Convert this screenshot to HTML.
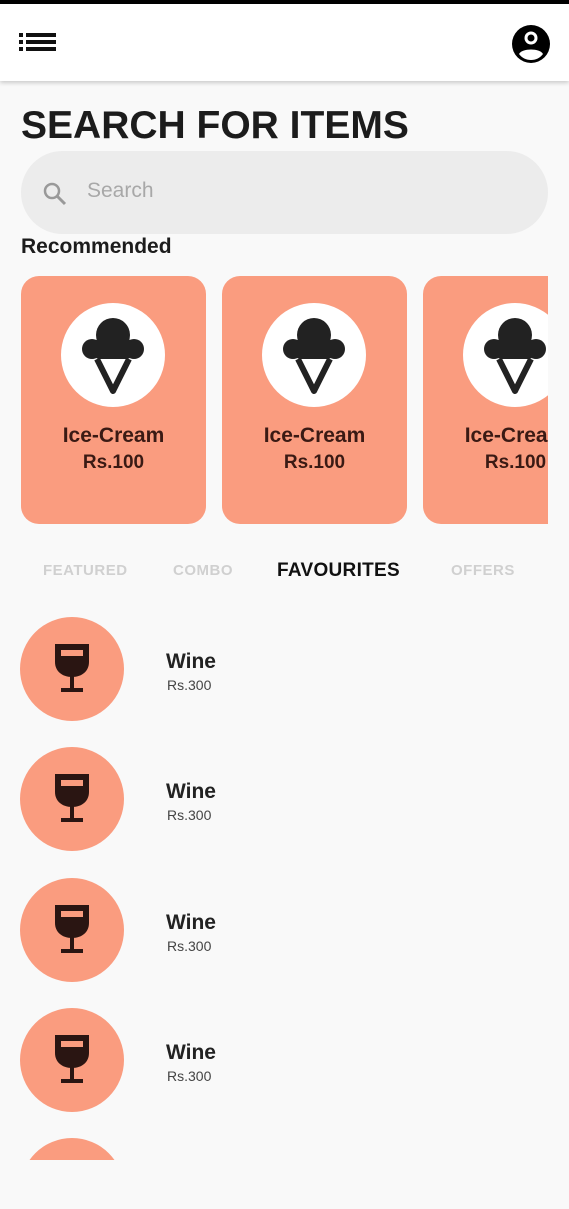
<!DOCTYPE html>
<html><head><meta charset="utf-8"><style>
*{margin:0;padding:0;box-sizing:border-box}
body{width:569px;height:1209px;background:#f9f9f9;font-family:"Liberation Sans",sans-serif;position:relative;overflow:hidden;color:#1c1c1c}
.top{position:absolute;left:0;top:0;width:569px;height:4px;background:#000}
.hdr{position:absolute;left:0;top:4px;width:569px;height:77px;background:#fff;box-shadow:0 2px 4px rgba(0,0,0,.18)}
h1{position:absolute;left:21px;top:104px;font-size:39px;font-weight:bold;letter-spacing:0px}
.search{position:absolute;left:21px;top:151px;width:527px;height:83px;border-radius:42px;background:#ececec}
.search span{position:absolute;left:66px;top:28px;font-size:21px;color:#a8a8a8}
.rec{position:absolute;left:21px;top:235px;font-size:21px;font-weight:bold}
.clip{position:absolute;left:0;top:270px;width:548px;height:270px;overflow:hidden}
.card{position:absolute;top:6px;width:185px;height:248px;border-radius:18px;background:#fa9c7f}
.card .c{position:absolute;left:40px;top:27px;width:104px;height:104px;border-radius:50%;background:#fff}
.card .n{position:absolute;left:0;width:185px;text-align:center;top:148px;font-size:21px;font-weight:bold;color:#3a1a14}
.card .p{position:absolute;left:0;width:185px;text-align:center;top:176px;font-size:19px;font-weight:bold;color:#3a1a14}
.tab{position:absolute;top:562px;font-size:15px;color:#d0d0d0;font-weight:bold;letter-spacing:0.5px}
.row .c{position:absolute;left:20px;width:104px;height:104px;border-radius:50%;background:#fa9c7f}
.w{position:absolute;left:166px;font-size:21px;font-weight:bold;color:#222}
.pr{position:absolute;left:167px;font-size:14px;color:#444}
</style></head><body>
<div class="top"></div>
<div class="hdr">
<svg style="position:absolute;left:19px;top:27px" width="38" height="22" viewBox="0 0 38 22"><g fill="#111"><rect x="0" y="2" width="4" height="4"/><rect x="0" y="9" width="4" height="4"/><rect x="0" y="16" width="4" height="4"/><rect x="7" y="2" width="30" height="4"/><rect x="7" y="9" width="30" height="4"/><rect x="7" y="16" width="30" height="4"/></g></svg>
<svg style="position:absolute;left:510px;top:19px" width="42" height="42" viewBox="0 0 42 42"><circle cx="21" cy="21" r="19" fill="#000"/><circle cx="21" cy="15" r="6.5" fill="#fff"/><path d="M9 31c3-6 21-6 24 0c-3 4-7 6-12 6s-9-2-12-6z" fill="#fff"/><circle cx="21" cy="15" r="3.5" fill="#000"/></svg>
</div>
<h1>SEARCH FOR ITEMS</h1>
<div class="search"><svg style="position:absolute;left:20px;top:29px" width="28" height="28" viewBox="0 0 28 28"><circle cx="11" cy="11" r="7" fill="none" stroke="#999" stroke-width="2.5"/><path d="M16 16l8 8" stroke="#999" stroke-width="3"/></svg><span>Search</span></div>
<div class="rec">Recommended</div>
<div class="clip">
<div class="card" style="left:21px"><div class="c"><svg width="104" height="104" viewBox="0 0 104 104"><g fill="#222"><circle cx="52" cy="32" r="17"/><circle cx="31" cy="46" r="10"/><circle cx="73" cy="46" r="10"/><rect x="31" y="36" width="42" height="20" rx="8"/></g><path d="M36 56L52 88L68 56" fill="none" stroke="#222" stroke-width="6" stroke-linejoin="round"/></svg></div><div class="n">Ice-Cream</div><div class="p">Rs.100</div></div>
<div class="card" style="left:222px"><div class="c"><svg width="104" height="104" viewBox="0 0 104 104"><g fill="#222"><circle cx="52" cy="32" r="17"/><circle cx="31" cy="46" r="10"/><circle cx="73" cy="46" r="10"/><rect x="31" y="36" width="42" height="20" rx="8"/></g><path d="M36 56L52 88L68 56" fill="none" stroke="#222" stroke-width="6" stroke-linejoin="round"/></svg></div><div class="n">Ice-Cream</div><div class="p">Rs.100</div></div>
<div class="card" style="left:423px"><div class="c"><svg width="104" height="104" viewBox="0 0 104 104"><g fill="#222"><circle cx="52" cy="32" r="17"/><circle cx="31" cy="46" r="10"/><circle cx="73" cy="46" r="10"/><rect x="31" y="36" width="42" height="20" rx="8"/></g><path d="M36 56L52 88L68 56" fill="none" stroke="#222" stroke-width="6" stroke-linejoin="round"/></svg></div><div class="n">Ice-Cream</div><div class="p">Rs.100</div></div>
</div>
<div class="tab" style="left:43px">FEATURED</div>
<div class="tab" style="left:173px">COMBO</div>
<div class="tab" style="left:277px;color:#111;font-size:19px;top:560px;letter-spacing:0.3px">FAVOURITES</div>
<div class="tab" style="left:451px">OFFERS</div>
<svg width="0" height="0" style="position:absolute"><defs><g id="g"><path d="M0 0h34v18c0 9-7 15-17 15S0 27 0 18z" fill="#2a1512"/><rect x="6" y="6" width="22" height="6" fill="#fa9c7f"/><rect x="15" y="32" width="4" height="12" fill="#2a1512"/><rect x="6" y="44" width="22" height="4" fill="#2a1512"/></g></defs></svg>
<div style="position:absolute;left:0;top:0;width:569px;height:1160px;overflow:hidden">
<div class="row"><div class="c" style="top:617px"><svg width="104" height="104"><use href="#g" x="35" y="27"/></svg></div><div class="w" style="top:650px">Wine</div><div class="pr" style="top:677px">Rs.300</div></div>
<div class="row"><div class="c" style="top:747px"><svg width="104" height="104"><use href="#g" x="35" y="27"/></svg></div><div class="w" style="top:780px">Wine</div><div class="pr" style="top:807px">Rs.300</div></div>
<div class="row"><div class="c" style="top:878px"><svg width="104" height="104"><use href="#g" x="35" y="27"/></svg></div><div class="w" style="top:911px">Wine</div><div class="pr" style="top:938px">Rs.300</div></div>
<div class="row"><div class="c" style="top:1008px"><svg width="104" height="104"><use href="#g" x="35" y="27"/></svg></div><div class="w" style="top:1041px">Wine</div><div class="pr" style="top:1068px">Rs.300</div></div>
<div class="row"><div class="c" style="top:1138px"></div></div>
</div>
</body></html>
